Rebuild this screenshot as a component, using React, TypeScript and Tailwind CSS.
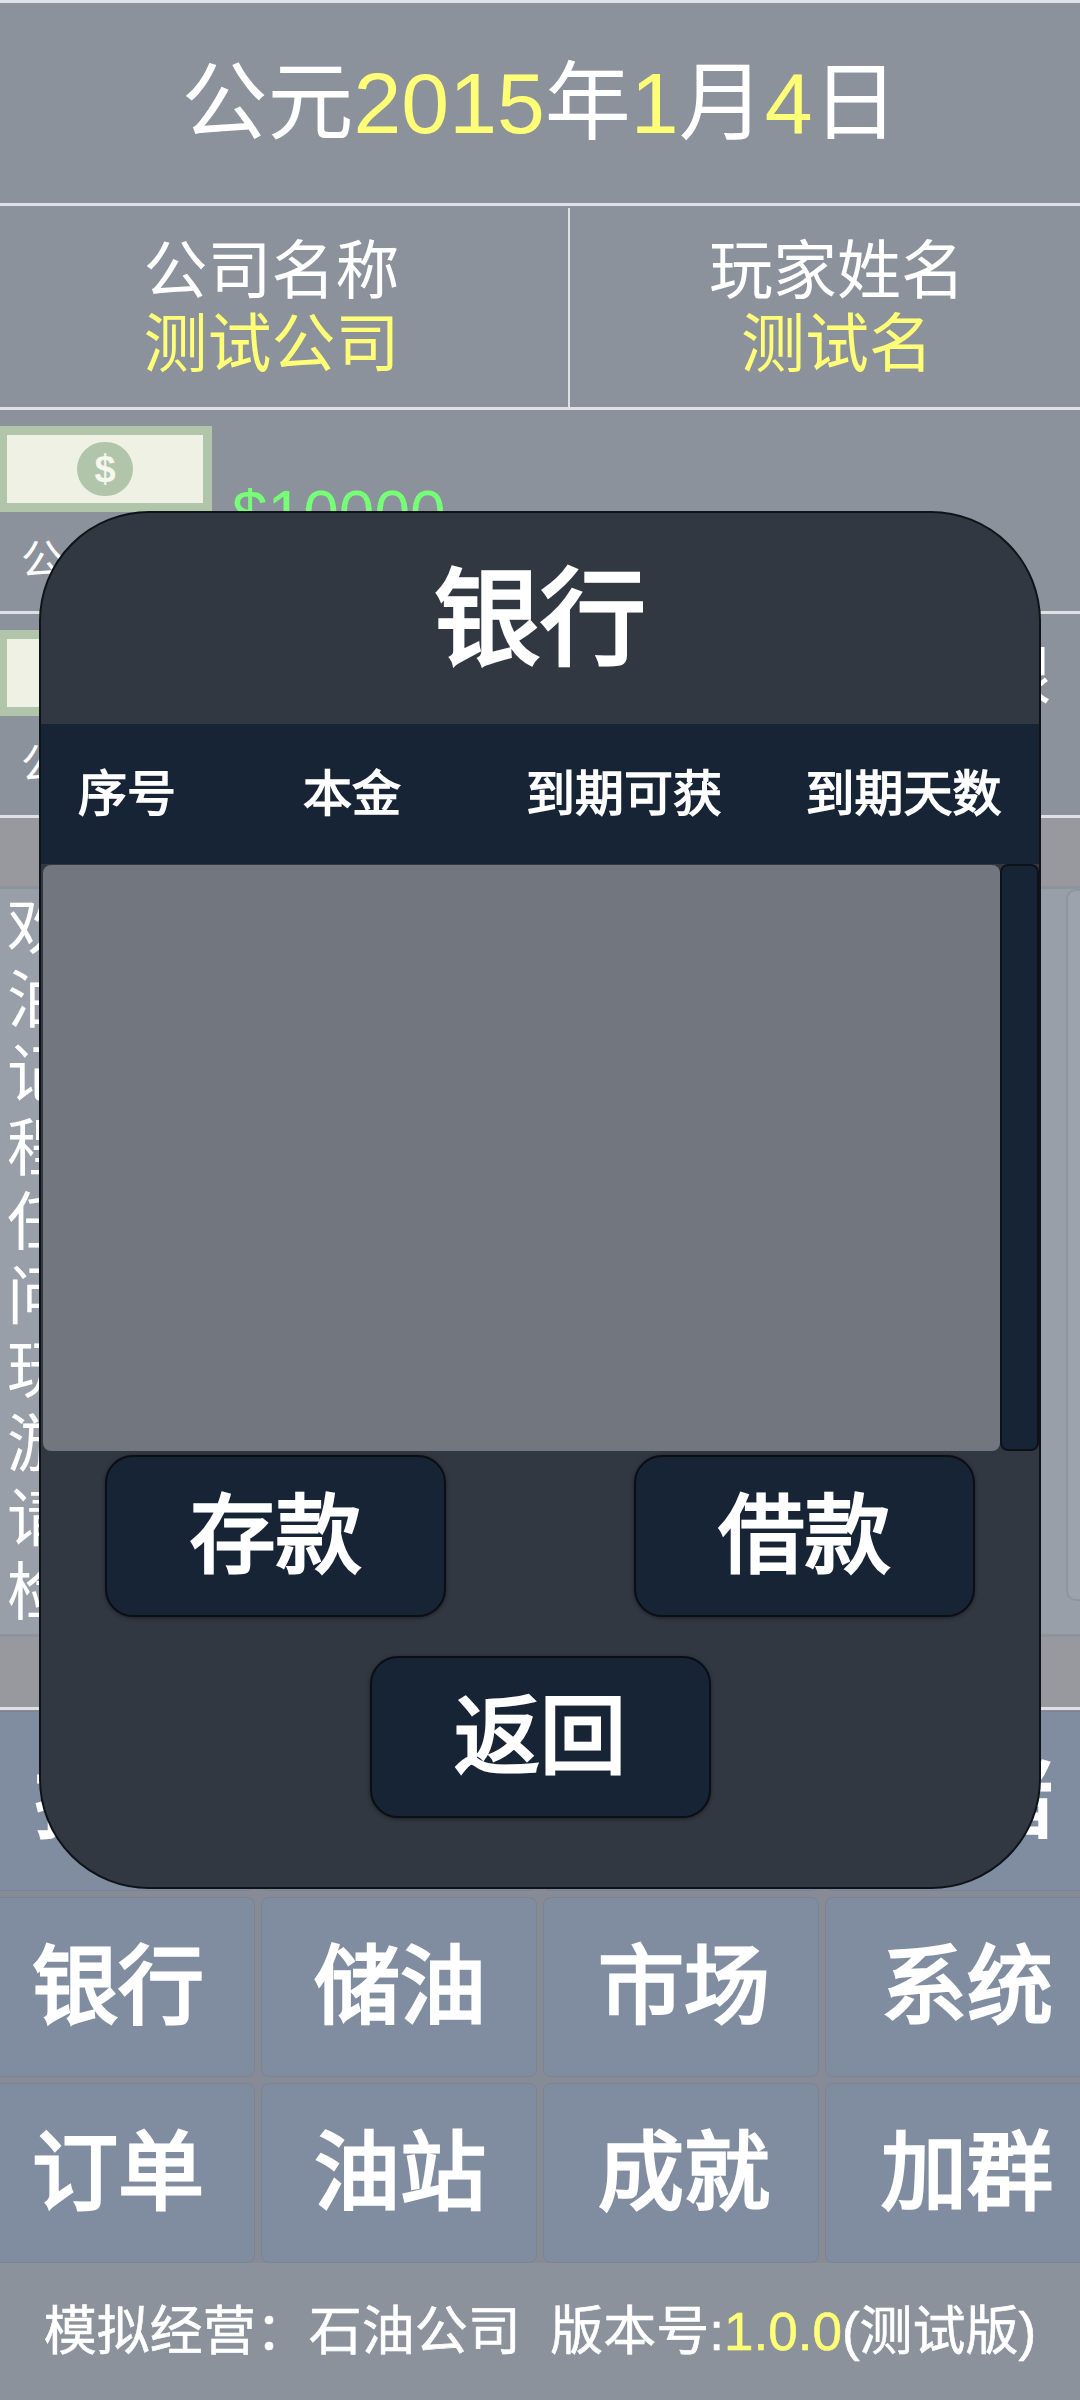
const FONT = "font-['Liberation_Sans','Noto_Sans_CJK_SC',sans-serif]";

function Bill() {
  return (
    <div className="flex h-[86px] w-[212px] items-center justify-center border-t-[9px] border-r-[9px] border-b-[9px] border-l-[7px] border-[#b1c5ab] bg-[#eff1e5]">
      <div className="flex h-[54px] w-[56px] items-center justify-center rounded-full bg-[#b1c5ab] text-[38px] leading-none font-bold text-[#f6f7ef]">$</div>
    </div>
  );
}

function MoneyRow({ amount, right }: { amount?: string; right?: string }) {
  return (
    <div className="flex h-[204px] items-start border-b-[3px] border-[#dfe1e7]">
      <div className="w-[212px] shrink-0 pt-[16px]">
        <Bill />
        <div className="mt-[24px] pl-[21px] text-[42px] leading-[50px] text-white">公</div>
      </div>
      {amount && <div className="mt-[68px] ml-[20px] text-[64px] leading-[73px] text-[#77ff77]">{amount}</div>}
      {right && <div className="mt-[26px] ml-auto pr-[29px] text-[64px] leading-[73px] text-white">{right}</div>}
    </div>
  );
}

function GameButton({ label, className = '' }: { label?: string; className?: string }) {
  return (
    <div className={`flex h-[180px] items-center justify-center rounded-[8px] border border-[#7c8393] bg-[#808da0] text-[86px] leading-none text-white [-webkit-text-stroke:3px_#fff] ${className}`}>
      {label}
    </div>
  );
}

function ModalButton({ label }: { label: string }) {
  return (
    <div className="flex h-[162px] w-[341px] items-center justify-center rounded-[28px] border-2 border-[#0b0e13] bg-[#172436] text-[86px] leading-none text-white shadow-[0_1px_4px_rgba(0,0,0,0.45)] [-webkit-text-stroke:3px_#fff]">
      {label}
    </div>
  );
}

const LOG = ['欢', '油', '记', '程', '任', '问', '玩', '游', '请', '检'];

export default function App() {
  return (
    <div className={`relative h-[2400px] w-[1080px] overflow-hidden bg-[#8c929c] ${FONT}`}>
      {/* date */}
      <div className="flex h-[206px] items-center justify-center border-y-[3px] border-[#dfe1e7] text-[86px] leading-none text-white">
        公元<span className="text-[#ffff77]">2015</span>年<span className="text-[#ffff77]">1</span>月<span className="text-[#ffff77]">4</span>日
      </div>

      {/* company + player */}
      <div className="flex h-[204px] border-b-[3px] border-[#dfe1e7] pt-[2px] text-center text-[64px] leading-[73px] text-white">
        <div className="flex w-[570px] flex-col justify-center border-r-2 border-[#dfe1e7] pr-[25px]">
          <div>公司名称</div>
          <div className="text-[#ffff77]">测试公司</div>
        </div>
        <div className="flex flex-1 flex-col justify-center pl-[24px]">
          <div>玩家姓名</div>
          <div className="text-[#ffff77]">测试名</div>
        </div>
      </div>

      <MoneyRow amount="$10000" />
      <MoneyRow right="银" />

      <div className="h-[68px] bg-[#97999f]" />

      {/* log panel */}
      <div className="flex h-[751px] justify-between border-y-[3px] border-[#8e939e] bg-[#999fa8] pl-[7px]">
        <div className="text-[63px] leading-[74px] text-white">
          {LOG.map((c) => (
            <div key={c}>{c}</div>
          ))}
        </div>
        <div className="h-[712px] w-[14px] rounded-l-[10px] border-2 border-r-0 border-[#8f959f] bg-[#9da3ac]" />
      </div>

      <div className="h-[73px] border-b-[3px] border-[#dfe1e7] bg-[#97999f]" />

      {/* action buttons, the outer two columns run past the screen edge */}
      <div className="-ml-[21px] grid w-[1132px] grid-cols-[276px_276px_276px_284px] gap-x-[6px] gap-y-[6px] bg-[#868b96] pt-[1px]">
        <GameButton label="招聘" className="pl-[8px]" />
        <GameButton />
        <GameButton />
        <GameButton label="仓储" />
        <GameButton label="银行" className="pl-[2px]" />
        <GameButton label="储油" className="pl-[2px]" />
        <GameButton label="市场" className="pl-[6px]" />
        <GameButton label="系统" />
        <GameButton label="订单" className="pl-[2px]" />
        <GameButton label="油站" className="pl-[2px]" />
        <GameButton label="成就" className="pl-[6px]" />
        <GameButton label="加群" />
      </div>

      <div className="flex h-[137px] items-center justify-center whitespace-pre text-[53px] text-white [-webkit-text-stroke:0.6px_#fff]">
        模拟经营：石油公司  版本号:<span className="text-[#ffff77] [-webkit-text-stroke:0.6px_#ffff77]">1.0.0</span>(测试版)
      </div>

      {/* bank dialog */}
      <div className="absolute top-[511px] left-[39px] h-[1378px] w-[1002px] overflow-hidden rounded-[110px] border-2 border-[#0f1318] bg-[#323842] text-white">
        <div className="flex h-[211px] items-center justify-center text-[106px] leading-none [-webkit-text-stroke:3.5px_#fff]">银行</div>
        <div className="-mx-[2px] flex h-[140px] items-center bg-[#172436] text-center text-[49px] leading-none [-webkit-text-stroke:1.5px_#fff]">
          <div className="w-[176px]">序号</div>
          <div className="w-[274px]">本金</div>
          <div className="w-[270px]">到期可获</div>
          <div className="flex-1 pl-[7px]">到期天数</div>
        </div>
        <div className="flex h-[587px]">
          <div className="mt-[1px] ml-[2px] flex-1 rounded-[8px] bg-[#72767e]" />
          <div className="w-[39px] rounded-[8px] border-2 border-[#0e1218] bg-[#172436]" />
        </div>
        <div className="mt-[4px] flex justify-between px-[64px]">
          <ModalButton label="存款" />
          <ModalButton label="借款" />
        </div>
        <div className="mt-[39px] flex justify-center">
          <ModalButton label="返回" />
        </div>
      </div>
    </div>
  );
}
